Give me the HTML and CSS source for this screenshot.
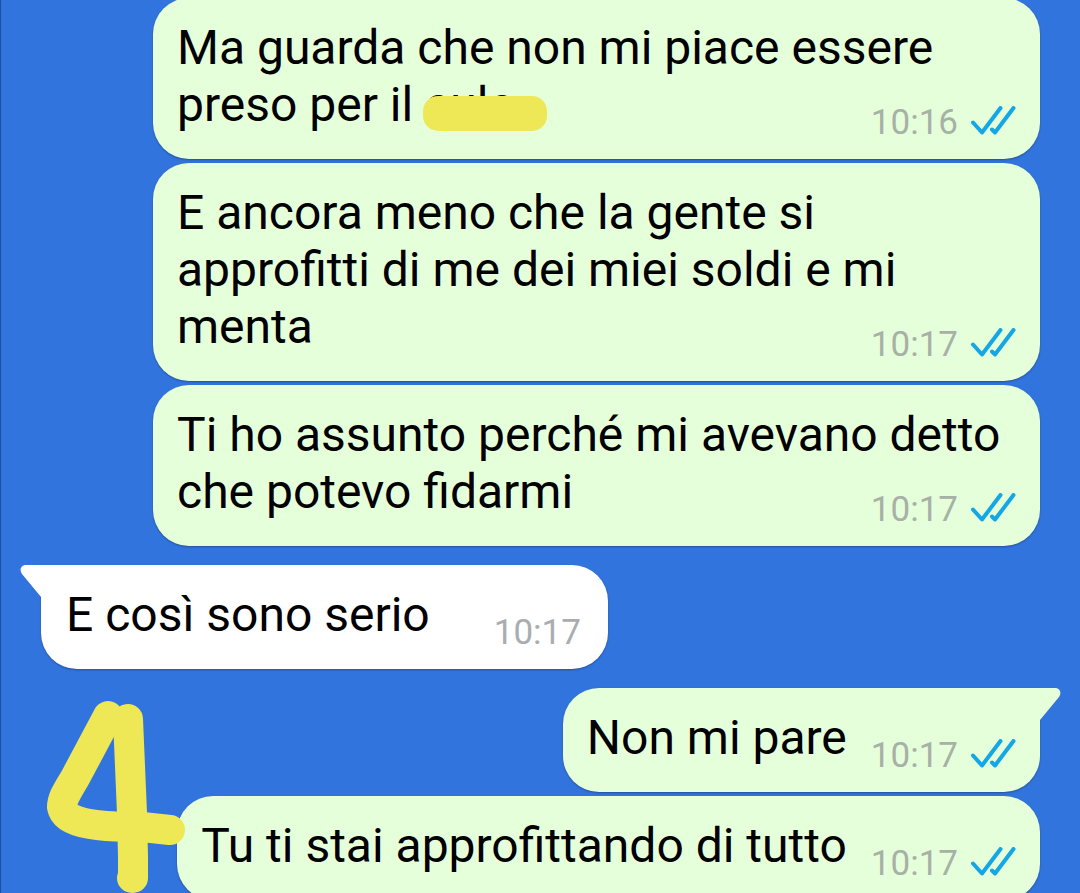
FILE: index.html
```html
<!DOCTYPE html>
<html lang="it">
<head>
    <meta charset="UTF-8">
    <meta name="viewport" content="width=device-width, initial-scale=1.0">
    <title>Chat</title>
    <link rel="stylesheet" href="styles.css">
</head>
<body>
    <!-- shared double tick icon -->
    <svg class="sprite" aria-hidden="true">
        <symbol id="ticks" viewBox="0 0 46 30">
            <path d="M3 16.5 L12 26.5 L30.5 2 M22 23.5 L25 26.5 L43.5 2"/>
        </symbol>
    </svg>

    <main class="chat">
        <div class="message out wide">
            <p class="text">Ma guarda che non mi piace essere<br>preso per il <span class="censored">culo</span></p>
            <div class="meta"><time>10:16</time><svg class="ticks"><use href="#ticks"/></svg></div>
        </div>

        <div class="message out wide">
            <p class="text">E ancora meno che la gente si<br>approfitti di me dei miei soldi e mi<br>menta</p>
            <div class="meta"><time>10:17</time><svg class="ticks"><use href="#ticks"/></svg></div>
        </div>

        <div class="message out wide">
            <p class="text">Ti ho assunto perché mi avevano detto<br>che potevo fidarmi</p>
            <div class="meta"><time>10:17</time><svg class="ticks"><use href="#ticks"/></svg></div>
        </div>

        <div class="message in first">
            <svg class="tail" viewBox="0 0 22 34"><path d="M22 0 H6 C1 0 -1 5 2 9 L21 32 L22 34 Z"/></svg>
            <p class="text">E così sono serio</p>
            <div class="meta"><time>10:17</time></div>
        </div>

        <div class="message out first">
            <svg class="tail" viewBox="0 0 22 34"><path d="M0 0 H16 C21 0 23 5 20 9 L1 32 L0 34 Z"/></svg>
            <p class="text">Non mi pare</p>
            <div class="meta"><time>10:17</time><svg class="ticks"><use href="#ticks"/></svg></div>
        </div>

        <div class="message out">
            <p class="text">Tu ti stai approfittando di tutto</p>
            <div class="meta"><time>10:17</time><svg class="ticks"><use href="#ticks"/></svg></div>
        </div>
    </main>

    <!-- hand drawn "4" -->
    <svg class="drawing" viewBox="0 0 140 194">
        <path d="M62 16 L29 78 C22 90 16 98 16 107 C18 118 32 122 44 124 C66 128 80 126 96 127 L124 130"/>
        <path d="M82 19 L86 113 L87 157 L87 178 L86 178"/>
    </svg>
</body>
</html>
```

FILE: styles.css
```css
* {
    box-sizing: border-box;
}

body {
    margin: 0;
    height: 100vh;
    position: relative;
    overflow: hidden;
    background-color: #3274dd;
    border-left: 1px solid #1f4f9f;
    font-family: Roboto, sans-serif;
    color: #000;
}

.sprite {
    position: absolute;
    width: 0;
    height: 0;
}

.chat {
    display: flex;
    flex-direction: column;
    gap: 4px;
    margin-top: -2px;
    padding: 0 40px;
}

.message {
    position: relative;
    display: flex;
    align-items: flex-end;
    gap: 24px;
    padding: 21px 24px 26px 24px;
    border-radius: 36px;
    box-shadow: 0 1px 2px rgba(0, 0, 0, 0.3);
}

.out {
    align-self: flex-end;
    background-color: #e6ffdb;
}

.in {
    align-self: flex-start;
    gap: 64px;
    padding-right: 27px;
    padding-left: 25px;
    background-color: #fff;
}

/* long messages: the time shares the last line with the text */
.wide {
    display: grid;
    width: 100%;
    max-width: 887px;
}

.wide .text,
.wide .meta {
    grid-area: 1 / 1;
}

.first {
    margin-top: 15px;
}

.in.first {
    border-top-left-radius: 0;
}

.out.first {
    border-top-right-radius: 0;
}

.text {
    margin: 0;
    font-size: 48px;
    line-height: 57px;
    white-space: nowrap;
}

.meta {
    display: flex;
    align-items: center;
    align-self: end;
    justify-self: end;
    gap: 12px;
    margin-bottom: -12px;
    font-size: 35px;
    line-height: 44px;
    color: #a9adb0;
}

.out .meta {
    color: #a7b1a6;
}

.ticks {
    width: 46px;
    height: 30px;
    margin-bottom: 4px;
    fill: none;
    stroke: #14a7e6;
    stroke-width: 4;
    stroke-linecap: round;
    stroke-linejoin: round;
}

.tail {
    position: absolute;
    top: 0;
    width: 22px;
    height: 34px;
}

.in .tail {
    left: -21px;
    fill: #fff;
}

.out .tail {
    right: -21px;
    fill: #e6ffdb;
}

.censored {
    position: relative;
}

.censored::after {
    content: "";
    position: absolute;
    top: 20px;
    left: -2px;
    width: 124px;
    height: 35px;
    border-radius: 15px;
    background-color: #eee857;
}

.drawing {
    position: absolute;
    left: 45px;
    bottom: -1px;
    width: 140px;
    height: 194px;
    fill: none;
    stroke: #eee857;
    stroke-width: 30;
    stroke-linecap: round;
    stroke-linejoin: round;
}
```
